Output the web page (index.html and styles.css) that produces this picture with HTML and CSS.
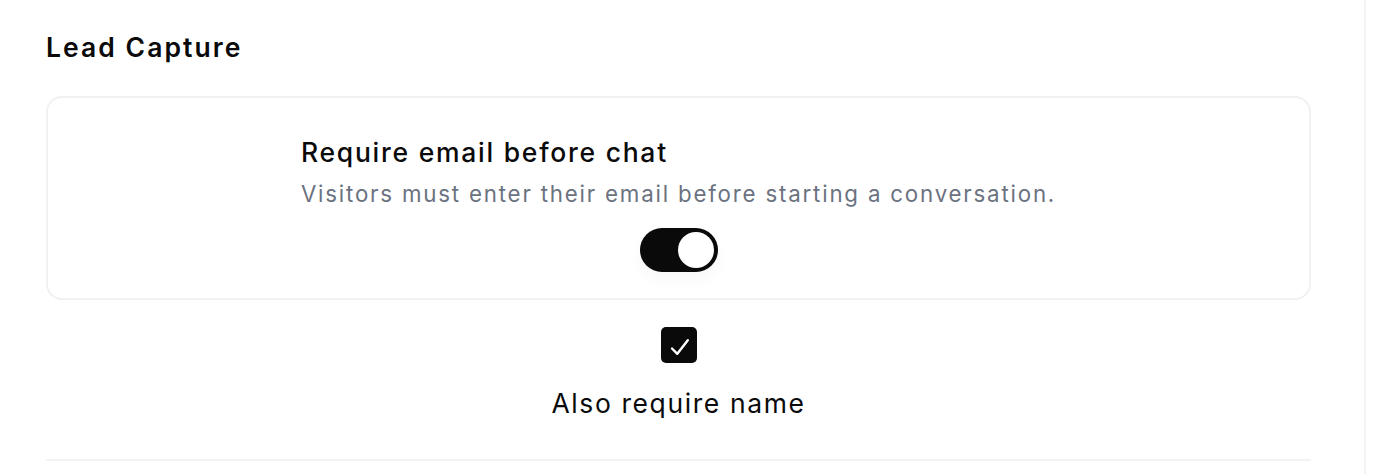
FILE: index.html
```html
<!DOCTYPE html>
<html lang="en">
<head>
<meta charset="utf-8">
<title>Lead Capture</title>
<link rel="stylesheet" href="styles.css">
</head>
<body>
<main class="panel">
  <h2 class="section-title">Lead Capture</h2>
  <div class="card">
    <div class="card-inner">
      <div class="card-text">
        <div class="card-title">Require email before chat</div>
        <div class="card-desc">Visitors must enter their email before starting a conversation.</div>
      </div>
      <div class="toggle" role="switch" aria-checked="true"><span class="knob"></span></div>
    </div>
  </div>
  <div class="check-row">
    <span class="checkbox">
      <svg width="36" height="36" viewBox="0 0 36 36" fill="none"><path d="M11 21.5 L16.3 26.8 L26.8 13.2" stroke="#fff" stroke-width="2.4" stroke-linecap="round" stroke-linejoin="round"/></svg>
    </span>
    <span class="check-label">Also require name</span>
  </div>
  <hr class="divider">
</main>
</body>
</html>
```
FILE: styles.css
```css
html, body {
  margin: 0;
  padding: 0;
  background: #ffffff;
  overflow: hidden;
}
body {
  font-family: Inter, "Noto Sans", sans-serif;
  color: #0a0a0a;
}
.panel {
  width: 1366px;
  height: 474px;
  padding: 31px 53px 0 46px;
  border-right: 2px solid #f3f3f3;
  box-sizing: border-box;
}
.section-title {
  margin: 0;
  font-size: 26.5px;
  line-height: 32px;
  font-weight: 600;
  letter-spacing: 2.05px;
  color: #0a0a0a;
}
.card {
  margin-top: 33px;
  border: 2px solid #f1f1f1;
  border-radius: 16px;
  padding: 38px 24px 26px;
  display: flex;
  justify-content: center;
}
.card-inner {
  display: flex;
  flex-direction: column;
  align-items: center;
}
.card-title {
  font-size: 26.5px;
  line-height: 32px;
  font-weight: 500;
  letter-spacing: 1.75px;
  color: #0a0a0a;
}
.card-desc {
  margin-top: 11px;
  font-size: 22.3px;
  line-height: 30px;
  letter-spacing: 1.8px;
  color: #6b7280;
}
.toggle {
  margin-top: 19px;
  width: 78px;
  height: 44px;
  border-radius: 22px;
  background: #0a0a0a;
  box-sizing: border-box;
  padding: 4px;
  display: flex;
  justify-content: flex-end;
  box-shadow: 0 8px 16px rgba(0,0,0,0.03);
}
.knob {
  width: 36px;
  height: 36px;
  border-radius: 50%;
  background: #fff;
}
.check-row {
  margin-top: 27px;
  display: flex;
  flex-direction: column;
  align-items: center;
  gap: 24px;
}
.checkbox {
  width: 36px;
  height: 36px;
  border-radius: 5px;
  background: #0a0a0a;
  display: flex;
}
.check-label {
  font-size: 26.5px;
  line-height: 32px;
  letter-spacing: 1.6px;
  color: #0a0a0a;
}
.divider {
  margin: 40px 0 0;
  border: 0;
  height: 2px;
  background: #f3f3f3;
  border-radius: 1px;
}
```
